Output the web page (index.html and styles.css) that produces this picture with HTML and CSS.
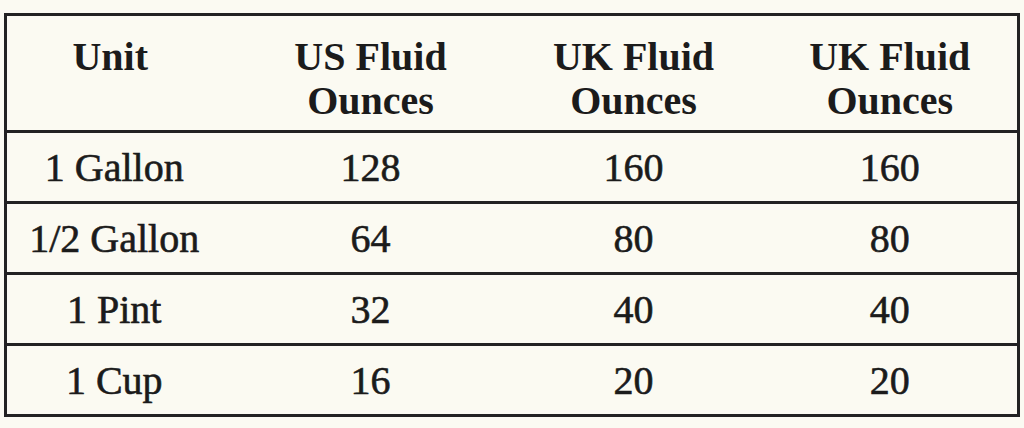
FILE: index.html
```html
<!DOCTYPE html>
<html lang="en">
<head>
<meta charset="utf-8">
<title>Fluid Ounces</title>
<link rel="stylesheet" href="styles.css">
</head>
<body>
<table class="conv">
  <colgroup>
    <col class="c1"><col class="c2"><col class="c3"><col class="c4">
  </colgroup>
  <thead>
    <tr>
      <th class="unit-h">Unit</th>
      <th>US Fluid<br>Ounces</th>
      <th>UK Fluid<br>Ounces</th>
      <th class="last">UK Fluid<br>Ounces</th>
    </tr>
  </thead>
  <tbody>
    <tr><td>1 Gallon</td><td>128</td><td>160</td><td class="last">160</td></tr>
    <tr><td>1/2 Gallon</td><td>64</td><td>80</td><td class="last">80</td></tr>
    <tr><td>1 Pint</td><td>32</td><td>40</td><td class="last">40</td></tr>
    <tr><td>1 Cup</td><td>16</td><td>20</td><td class="last">20</td></tr>
  </tbody>
</table>
</body>
</html>
```
FILE: styles.css
```css
html, body {
  margin: 0;
  background: #fbfaf2;
}
body {
  padding: 13px 0 0 4px;
  font-family: "Liberation Serif", "Times New Roman", serif;
  color: #1b1b1b;
}
.conv {
  border-collapse: collapse;
  width: 1013px;
  table-layout: fixed;
  border: 3px solid #222;
}
.c1 { width: 216px; }
.c2 { width: 298px; }
.c3 { width: 228px; }
.c4 { width: 271px; }
.conv th {
  height: 117px;
  font-size: 40px;
  font-weight: 700;
  line-height: 44px;
  text-align: center;
  vertical-align: top;
  padding: 19px 0 0;
  box-sizing: border-box;
}
.conv th.unit-h { padding-right: 8px; }
.conv td {
  height: 71px;
  font-size: 40px;
  font-weight: 400;
  -webkit-text-stroke: 0.6px #1b1b1b;
  text-align: center;
  vertical-align: middle;
  padding: 0;
  border-top: 3px solid #222;
  box-sizing: border-box;
}
.conv .last { padding-left: 15px; }
```
